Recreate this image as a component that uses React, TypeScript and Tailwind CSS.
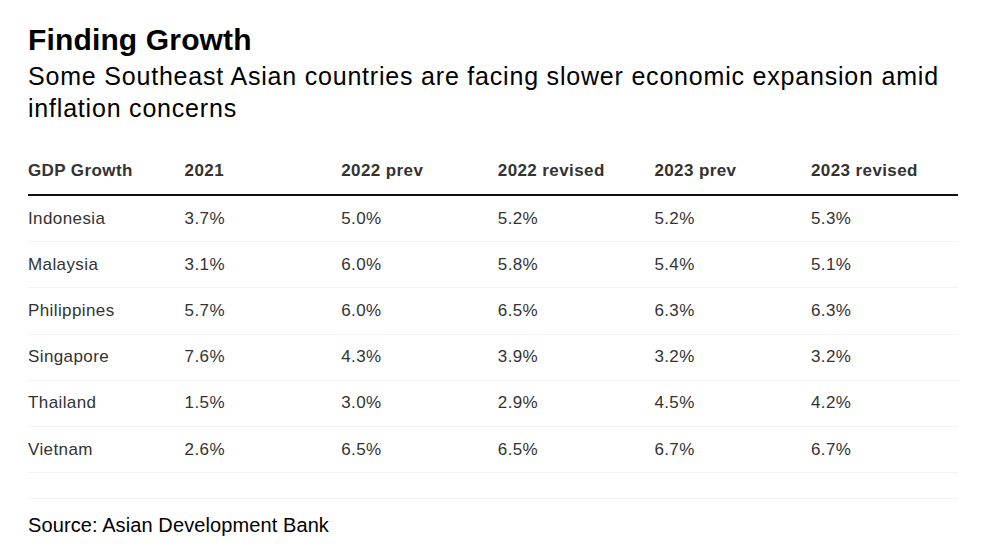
import React from "react";

const columns = ["GDP Growth", "2021", "2022 prev", "2022 revised", "2023 prev", "2023 revised"];

const rows: string[][] = [
  ["Indonesia", "3.7%", "5.0%", "5.2%", "5.2%", "5.3%"],
  ["Malaysia", "3.1%", "6.0%", "5.8%", "5.4%", "5.1%"],
  ["Philippines", "5.7%", "6.0%", "6.5%", "6.3%", "6.3%"],
  ["Singapore", "7.6%", "4.3%", "3.9%", "3.2%", "3.2%"],
  ["Thailand", "1.5%", "3.0%", "2.9%", "4.5%", "4.2%"],
  ["Vietnam", "2.6%", "6.5%", "6.5%", "6.7%", "6.7%"],
];

const grid = "grid grid-cols-[repeat(5,156.6px)_1fr]";

const App = () => {
  return (
    <div className="min-h-screen w-full bg-white font-['Liberation_Sans',Arial,sans-serif]">
      <div className="w-[930px] ml-[28px] pt-[22px]">
        <h1 className="text-[30px] leading-[36px] font-bold text-black tracking-[0.15px]">
          Finding Growth
        </h1>
        <p className="mt-[2px] text-[25px] leading-[32px] text-black tracking-[0.8px] whitespace-nowrap">
          Some Southeast Asian countries are facing slower economic expansion amid
          <br />
          inflation concerns
        </p>

        <div className="mt-[37px]">
          <div className={`${grid} pb-[13px] border-b-2 border-[#111]`}>
            {columns.map((c) => (
              <div
                key={c}
                className="text-[17px] leading-[20px] font-bold text-[#333] tracking-[0.4px]"
              >
                {c}
              </div>
            ))}
          </div>

          {rows.map((r) => (
            <div
              key={r[0]}
              className={`${grid} h-[46.2px] items-center border-b border-[#f2f2f2]`}
            >
              {r.map((v, i) => (
                <div key={i} className="text-[17px] leading-[20px] text-[#333] tracking-[0.4px]">
                  {v}
                </div>
              ))}
            </div>
          ))}

          <div className="h-[26px] border-b border-[#f2f2f2]" />
        </div>

        <p className="mt-[12px] text-[20px] leading-[28px] text-black tracking-[0.1px]">
          Source: Asian Development Bank
        </p>
      </div>
    </div>
  );
};

export default App;
